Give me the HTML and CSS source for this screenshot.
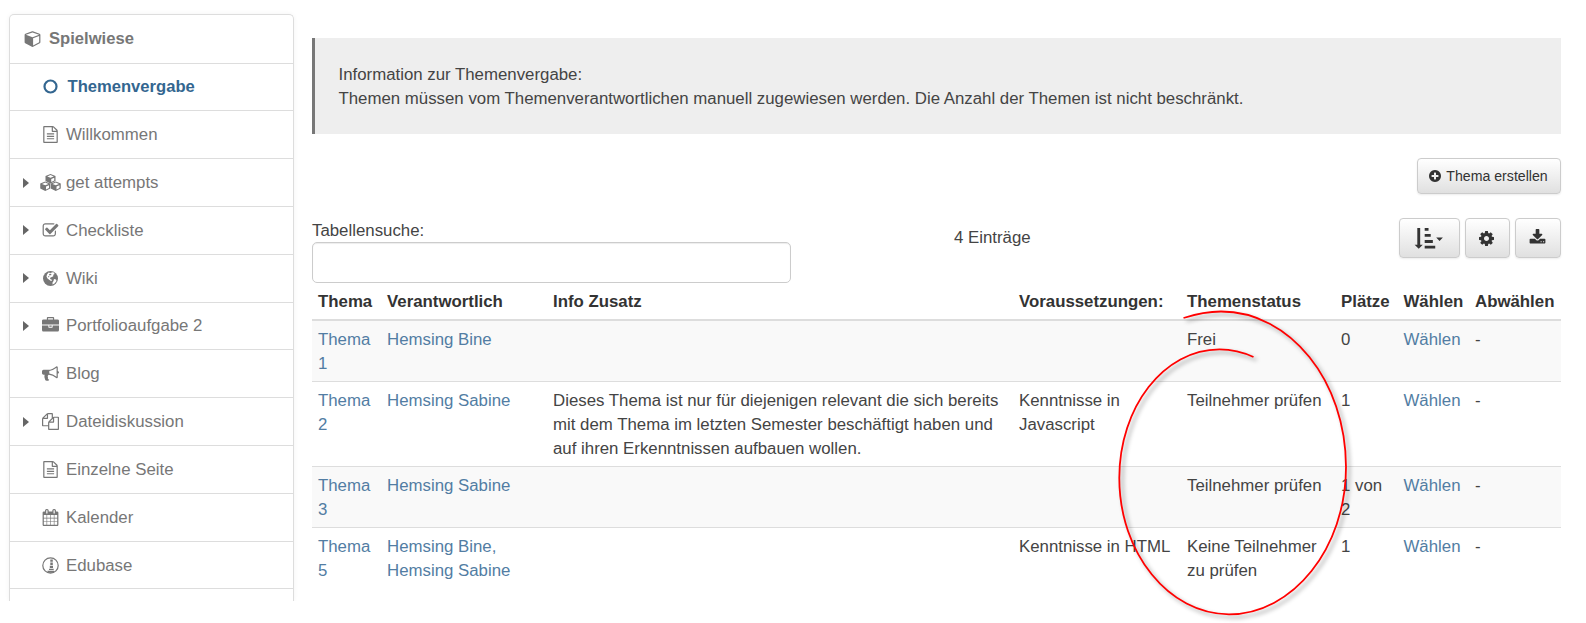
FILE: index.html
```html
<!DOCTYPE html>
<html lang="de">
<head>
<meta charset="utf-8">
<title>Themenvergabe</title>
<link rel="stylesheet" href="styles.css">
</head>
<body>
<div class="page">
  <nav class="sidebar">
    <a class="item root"><svg class="ico-root" viewBox="0 0 1664 1792"><path d="M896 1629l640-349v-636l-640 233v752zm-64-865l698-254-698-254-698 254 698 254zm832-252v768q0 35-18 65t-49 47l-704 384q-28 16-61 16t-61-16l-704-384q-31-17-49-47t-18-65v-768q0-40 23-73t61-50l704-256q22-8 44-8t44 8l704 256q38 17 61 50t23 73z"/></svg><span>Spielwiese</span></a>
    <a class="item active"><i class="gap"></i><i class="ico"><svg class="w15" viewBox="0 0 15 15"><circle cx="7.5" cy="7.5" r="6" fill="none" stroke="currentColor" stroke-width="2.2"/></svg></i><span>Themenvergabe</span></a>
    <a class="item"><i class="gap"></i><i class="ico"><svg class="w17" viewBox="0 0 1792 1792"><path id="doc" d="M1596 380q28 28 48 76t20 88v1152q0 40-28 68t-68 28h-1344q-40 0-68-28t-28-68v-1600q0-40 28-68t68-28h896q40 0 88 20t76 48zm-444-244v376h376q-10-29-22-41l-313-313q-12-12-41-22zm384 1528v-1024h-416q-40 0-68-28t-28-68v-416h-768v1536h1280zm-1024-864q0-14 9-23t23-9h704q14 0 23 9t9 23v64q0 14-9 23t-23 9h-704q-14 0-23-9t-9-23v-64zm736 224q14 0 23 9t9 23v64q0 14-9 23t-23 9h-704q-14 0-23-9t-9-23v-64q0-14 9-23t23-9h704zm0 256q14 0 23 9t9 23v64q0 14-9 23t-23 9h-704q-14 0-23-9t-9-23v-64q0-14 9-23t23-9h704z"/></svg></i><span>Willkommen</span></a>
    <a class="item"><i class="gap caret"></i><i class="ico"><svg class="w21" viewBox="0 0 42 34">
      <g id="c"><path fill-rule="evenodd" d="M21 0L31 4V14L21 19L11 14V4ZM21 2.200L14.500 4.800L21 7.600L27.500 4.800ZM22.500 10V15.800L28.500 12.800V7.400Z"/></g>
      <use href="#c" x="-10.500" y="15"/><use href="#c" x="10.500" y="15"/></svg></i><span>get attempts</span></a>
    <a class="item"><i class="gap caret"></i><i class="ico"><svg class="w17" viewBox="0 0 1792 1792"><path d="M1472 930v318q0 119-84.500 203.500t-203.500 84.500h-832q-119 0-203.500-84.500t-84.500-203.500v-832q0-119 84.500-203.500t203.500-84.500h832q63 0 117 25 15 7 18 23 3 17-9 29l-49 49q-10 10-23 10-3 0-9-2-23-6-45-6h-832q-66 0-113 47t-47 113v832q0 66 47 113t113 47h832q66 0 113-47t47-113v-254q0-13 9-22l64-64q10-10 23-10 6 0 12 3 20 8 20 29zm231-489l-814 814q-24 24-57 24t-57-24l-430-430q-24-24-24-57t24-57l110-110q24-24 57-24t57 24l263 263 647-647q24-24 57-24t57 24l110 110q24 24 24 57t-24 57z"/></svg></i><span>Checkliste</span></a>
    <a class="item"><i class="gap caret"></i><i class="ico"><svg class="w15" viewBox="0 0 30 30"><circle cx="15" cy="15" r="15"/><path fill="#fff" d="M11 3L15 4L19 2.500L22 3L23 6L20 8L21 10L18 12L15 13L14 16L17 17L18 19L16 20L13 18L9 15L7 11L8 7ZM22 16L26 17L27 20L23 25L19 27L19 23L21 20Z"/><path d="M12 6L16 5.500L17 8L13 9ZM10 10L13 11L11 13Z"/></svg></i><span>Wiki</span></a>
    <a class="item"><i class="gap caret"></i><i class="ico"><svg class="w17" viewBox="0 0 1792 1792"><path d="M640 256h512v-128h-512v128zm1152 640v480q0 66-47 113t-113 47h-1472q-66 0-113-47t-47-113v-480h672v160q0 26 19 45t45 19h320q26 0 45-19t19-45v-160h672zm-768 0v128h-256v-128h256zm768-480v384h-1792v-384q0-66 47-113t113-47h352v-160q0-40 28-68t68-28h576q40 0 68 28t28 68v160h352q66 0 113 47t47 113z"/></svg></i><span>Portfolioaufgabe 2</span></a>
    <a class="item"><i class="gap"></i><i class="ico"><svg class="w17" viewBox="0 0 1792 1792"><path d="M1664 640q53 0 90.500 37.500t37.500 90.500-37.500 90.500-90.500 37.500v384q0 52-38 90t-90 38q-417-347-812-380-58 19-91 66t-31 100.500 40 92.500q-20 33-23 65.500t6 58 33.500 55 48 50 61.500 50.500q-29 58-111.500 83t-168.500 11.500-132-55.500q-7-23-29.500-87.500t-32-94.500-23-89-15-101 3.500-98.500 22-110.500h-122q-66 0-113-47t-47-113v-192q0-66 47-113t113-47h480q435 0 896-384 52 0 90 38t38 90v384zm-128 604v-954q-394 302-768 343v270q377 42 768 341z"/></svg></i><span>Blog</span></a>
    <a class="item"><i class="gap caret"></i><i class="ico"><svg class="w17" viewBox="0 0 1792 1792"><path d="M1696 384q40 0 68 28t28 68v1216q0 40-28 68t-68 28h-960q-40 0-68-28t-28-68v-288h-544q-40 0-68-28t-28-68v-672q0-40 20-88t48-76l408-408q28-28 76-48t88-20h416q40 0 68 28t28 68v328q68-40 128-40h416zm-544 213l-299 299h299v-299zm-640-384l-299 299h299v-299zm196 647l316-316v-416h-384v416q0 40-28 68t-68 28h-416v640h512v-256q0-40 20-88t48-76zm956 804v-1152h-384v416q0 40-28 68t-68 28h-416v640h896z"/></svg></i><span>Dateidiskussion</span></a>
    <a class="item"><i class="gap"></i><i class="ico"><svg class="w17" viewBox="0 0 1792 1792"><use href="#doc"/></svg></i><span>Einzelne Seite</span></a>
    <a class="item"><i class="gap"></i><i class="ico"><svg class="w17" viewBox="0 0 1792 1792"><path d="M192 1664h288v-288h-288v288zm352 0h320v-288h-320v288zm-352-352h288v-320h-288v320zm352 0h320v-320h-320v320zm-352-384h288v-288h-288v288zm736 736h320v-288h-320v288zm-384-736h320v-288h-320v288zm768 736h288v-288h-288v288zm-384-352h320v-320h-320v320zm-352-864v-288q0-13-9.500-22.500t-22.500-9.500h-64q-13 0-22.500 9.500t-9.500 22.500v288q0 13 9.500 22.500t22.500 9.500h64q13 0 22.500-9.500t9.500-22.500zm736 864h288v-320h-288v320zm-384-384h320v-288h-320v288zm384 0h288v-288h-288v288zm32-480v-288q0-13-9.500-22.500t-22.500-9.500h-64q-13 0-22.500 9.500t-9.500 22.500v288q0 13 9.500 22.500t22.500 9.500h64q13 0 22.500-9.500t9.500-22.500zm384-64v1280q0 52-38 90t-90 38h-1408q-52 0-90-38t-38-90v-1280q0-52 38-90t90-38h128v-96q0-66 47-113t113-47h64q66 0 113 47t47 113v96h384v-96q0-66 47-113t113-47h64q66 0 113 47t47 113v96h128q52 0 90 38t38 90z"/></svg></i><span>Kalender</span></a>
    <a class="item"><i class="gap"></i><i class="ico"><svg class="w17" viewBox="0 0 17 17"><circle cx="8.500" cy="8.500" r="7.700" fill="none" stroke="currentColor" stroke-width="1.200"/><path d="M8.300 2.500h2.500v2.300H8.300zM8.300 5.500h2.500v2.500H8.300zM7.800 8.700h3.200v2.200H7.800zM7 11.700h4.700v1.300H7zM5.500 13.800h6.500v2H5.500z"/></svg></i><span>Edubase</span></a>
  </nav>

  <main class="main">
    <div class="info">Information zur Themenvergabe:<br>Themen müssen vom Themenverantwortlichen manuell zugewiesen werden. Die Anzahl der Themen ist nicht beschränkt.</div>
    <div class="actions"><button class="btn create"><svg viewBox="128 128 1536 1536"><path d="M1344 960v-128q0-26-19-45t-45-19h-256v-256q0-26-19-45t-45-19h-128q-26 0-45 19t-19 45v256h-256q-26 0-45 19t-19 45v128q0 26 19 45t45 19h256v256q0 26 19 45t45 19h128q26 0 45-19t19-45v-256h256q26 0 45-19t19-45zm320-64q0 209-103 385.500t-279.500 279.500-385.500 103-385.500-103-279.500-279.500-103-385.500 103-385.500 279.500-279.500 385.500-103 385.500 103 279.500 279.500 103 385.500z"/></svg>Thema erstellen</button></div>
    <div class="toolbar">
      <div class="search"><label for="q">Tabellensuche:</label><input id="q" type="text"></div>
      <div class="count">4 Einträge</div>
      <div class="tools">
        <button class="btn sort"><svg width="30" height="23" viewBox="0 0 30 24"><path d="M2.800 1h3v17.500h2.700L4.300 22.800L0 18.500h2.800zM10.500 1h4v3h-4zM10.500 7.300h6.300v3h-6.300zM10.500 13.600h8.500v3h-8.500zM10.500 19.500h11v3h-11zM22.500 11h7l-3.500 3.600z"/></svg></button>
        <button class="btn gear"><svg width="15" height="15" viewBox="128 128 1536 1536"><path d="M1152 896q0-106-75-181t-181-75-181 75-75 181 75 181 181 75 181-75 75-181zm512-109v222q0 12-8 23t-20 13l-185 28q-19 54-39 91 35 50 107 138 10 12 10 25t-9 23q-27 37-99 108t-94 71q-12 0-26-9l-138-108q-44 23-91 38-16 136-29 186-7 28-36 28h-222q-14 0-24.500-8.500t-11.500-21.500l-28-184q-49-16-90-37l-141 107q-10 9-25 9-14 0-25-11-126-114-165-168-7-10-7-23 0-12 8-23 15-21 51-66.500t54-70.500q-27-50-41-99l-183-27q-13-2-21-12.500t-8-23.500v-222q0-12 8-23t19-13l186-28q14-46 39-92-40-57-107-138-10-12-10-24 0-10 9-23 26-36 98.500-107.500t94.500-71.500q13 0 26 10l138 107q44-23 91-38 16-136 29-186 7-28 36-28h222q14 0 24.500 8.500t11.500 21.500l28 184q49 16 90 37l142-107q9-9 24-9 13 0 25 10 129 119 165 170 7 8 7 22 0 12-8 23-15 21-51 66.500t-54 70.500q26 50 41 98l183 28q13 2 21 12.500t8 23.500z"/></svg></button>
        <button class="btn load"><svg width="17" height="17" viewBox="0 0 1792 1792"><path d="M1344 1344q0-26-19-45t-45-19-45 19-19 45 19 45 45 19 45-19 19-45zm256 0q0-26-19-45t-45-19-45 19-19 45 19 45 45 19 45-19 19-45zm128-224v320q0 40-28 68t-68 28h-1472q-40 0-68-28t-28-68v-320q0-40 28-68t68-28h465l135 136q58 56 136 56t136-56l136-136h464q40 0 68 28t28 68zm-325-569q17 41-14 70l-448 448q-18 19-45 19t-45-19l-448-448q-31-29-14-70 17-39 59-39h256v-448q0-26 19-45t45-19h256q26 0 45 19t19 45v448h256q42 0 59 39z"/></svg></button>
      </div>
    </div>
    <table class="topics">
      <colgroup><col class="c1"><col class="c2"><col class="c3"><col class="c4"><col class="c5"><col class="c6"><col class="c7"><col></colgroup>
      <thead><tr><th>Thema</th><th>Verantwortlich</th><th>Info Zusatz</th><th>Voraussetzungen:</th><th>Themenstatus</th><th>Plätze</th><th>Wählen</th><th>Abwählen</th></tr></thead>
      <tbody>
        <tr class="odd"><td><a>Thema<br>1</a></td><td><a>Hemsing Bine</a></td><td></td><td></td><td>Frei</td><td>0</td><td><a>Wählen</a></td><td>-</td></tr>
        <tr><td><a>Thema<br>2</a></td><td><a>Hemsing Sabine</a></td><td>Dieses Thema ist nur für diejenigen relevant die sich bereits<br>mit dem Thema im letzten Semester beschäftigt haben und<br>auf ihren Erkenntnissen aufbauen wollen.</td><td>Kenntnisse in<br>Javascript</td><td>Teilnehmer prüfen</td><td>1</td><td><a>Wählen</a></td><td>-</td></tr>
        <tr class="odd"><td><a>Thema<br>3</a></td><td><a>Hemsing Sabine</a></td><td></td><td></td><td>Teilnehmer prüfen</td><td>1 von<br>2</td><td><a>Wählen</a></td><td>-</td></tr>
        <tr><td><a>Thema<br>5</a></td><td><a>Hemsing Bine,</a><br><a>Hemsing Sabine</a></td><td></td><td>Kenntnisse in HTML</td><td>Keine Teilnehmer<br>zu prüfen</td><td>1</td><td><a>Wählen</a></td><td>-</td></tr>
      </tbody>
    </table>
  </main>
  <svg class="mark" width="250" height="323" viewBox="1110 300 250 323"><path d="M1183.500 318C1196 314 1208 311.500 1221 311.500C1290 311.500 1346 381 1346 467C1346 548 1293 614.300 1229 614.300C1169 614.300 1119.300 553 1119.300 478C1119.300 407 1164 349.300 1219.500 349.300C1231 349.300 1243 352 1253.500 357"/></svg>
</div>
</body>
</html>
```
FILE: styles.css
```css
* { box-sizing: border-box; }
body { margin: 0; background: #fff; color: #444; font: 16.820px/24px "Liberation Sans", Arial, sans-serif; }
.page { position: relative; display: flex; height: 623px; overflow: hidden; padding-top: 14px; }
svg { display: block; fill: currentColor; }

.sidebar { margin-left: 9px; width: 285px; height: 587px; border: 1px solid #ddd; border-bottom: 0; border-radius: 5px 5px 0 0; box-shadow: 0 0 5px rgba(0,0,0,.05); flex: none; clip-path: inset(-6px -6px 0 -6px); }
.item { display: flex; align-items: center; height: 47.820px; border-bottom: 1px solid #ddd; color: #777; }
.item span { padding-top: 1px; }
.root { height: 48.500px; padding-left: 14px; font-weight: bold; }
.root, .active { font-size: 16.600px; }
.ico-root { width: 17px; height: 17px; margin-right: 8px; }
.active { color: #336690; font-weight: bold; }
.active span { padding-left: 1.500px; }
.gap { width: 30px; padding-left: 13px; }
.caret::before { content: ""; display: block; width: 0; border: 5px solid transparent; border-left: 6px solid #666; border-right: 0; }
.ico { display: flex; justify-content: center; width: 21px; margin-right: 5px; }
.w15 { width: 15px; height: 15px; }
.w17 { width: 17px; height: 17px; }
.w21 { width: 21px; height: 17px; flex: none; }

.main { width: 1249px; margin-left: 18px; padding-top: 24px; }
.info { height: 96px; padding: 25px 24px 23px 23.500px; border-left: 3px solid #777; background: #eee; }
.actions { display: flex; justify-content: flex-end; padding: 24px .5px 0 0; height: 84px; }
.btn { display: flex; align-items: center; justify-content: center; padding: 0; border: 1px solid #ccc; border-radius: 4px; color: #333; background: linear-gradient(#fff, #e0e0e0); box-shadow: 0 1px 2px rgba(0,0,0,.08); font: 14.150px/20px "Liberation Sans", Arial, sans-serif; }
.create { width: 144px; height: 36px; gap: 5px; }
.create svg { width: 12px; height: 12px; }
.toolbar { display: flex; height: 65px; }
.search { width: 479px; }
.search label { display: block; height: 24px; padding-top: 1px; }
.search input { display: block; width: 479px; height: 41px; border: 1px solid #ccc; border-radius: 5px; background: #fff; box-shadow: inset 0 1px 1px rgba(0,0,0,.075); }
.count { margin-left: 163px; padding-top: 8px; }
.tools { display: flex; gap: 5px; margin-left: auto; padding-right: .5px; }
.tools .btn { height: 40px; }
.tools .sort { width: 61px; }
.tools .gear { width: 45px; padding-right: 1px; }
.tools .load { width: 46px; padding: 0 1px 2px 0; }

.topics { width: 1249px; table-layout: fixed; border-collapse: separate; border-spacing: 0; }
.topics th, .topics td { padding: 7px 6px 5px; text-align: left; vertical-align: top; white-space: nowrap; }
.topics th { color: #333; border-bottom: 2px solid #ddd; }
.topics td { border-bottom: 1px solid #ddd; }
.topics tr:last-child td { border-bottom: 0; }
.topics thead tr:last-child th { border-bottom: 2px solid #ddd; }
.topics a { color: #527da3; }
.odd td { background: #f9f9f9; }
.c1 { width: 69px; }
.c2 { width: 166px; }
.c3 { width: 466px; }
.c4 { width: 168px; }
.c5 { width: 154px; }
.c6 { width: 62.500px; }
.c7 { width: 71.500px; }

.mark { position: absolute; left: 1110px; top: 300px; filter: drop-shadow(3px 3px 2px rgba(0,0,0,.4)); }
.mark path { fill: none; stroke: #f00; stroke-width: 1.800; }
```
